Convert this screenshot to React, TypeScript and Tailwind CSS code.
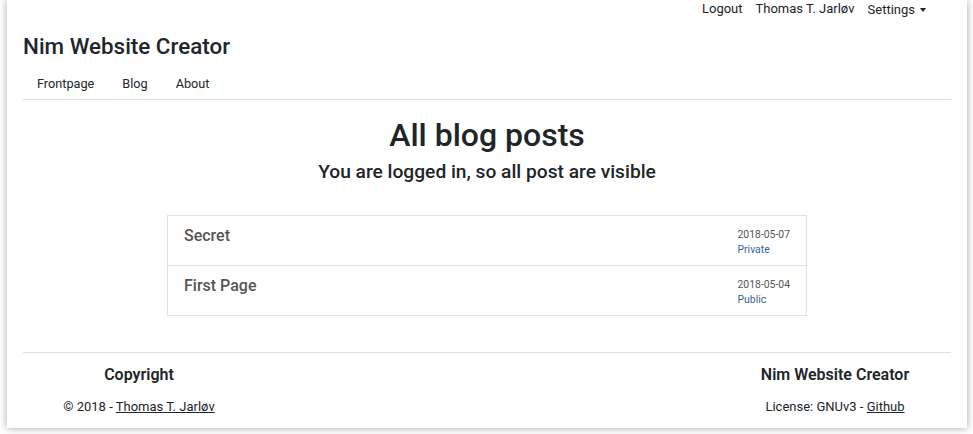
import React from 'react';

const POSTS = [
  { title: 'Secret', date: '2018-05-07', status: 'Private' },
  { title: 'First Page', date: '2018-05-04', status: 'Public' },
];

export default function App() {
  return (
    <div className="min-h-screen bg-white pl-[7px] pr-[6px] font-['Roboto',sans-serif] text-[#212529]">
      <div className="w-[960px] h-[428px] bg-white shadow-[0_0_8px_rgba(0,0,0,0.35)] flex flex-col">
        {/* Top bar */}
        <div className="flex justify-end gap-[13px] pr-[41px] pt-[1px] h-[18px] text-[13px] leading-[16px]">
          <span>Logout</span>
          <span>Thomas T. Jarløv</span>
          <span className="flex items-center gap-[5px]">
            Settings
            <span className="w-0 h-0 border-l-[3px] border-r-[3px] border-t-[4px] border-l-transparent border-r-transparent border-t-[#212529]" />
          </span>
        </div>

        <div className="px-4">
          <h1 className="mt-[15px] text-[22.4px] leading-[27px] font-medium">Nim Website Creator</h1>
          <nav className="flex mt-[16px] text-[12.7px] leading-[16px] pb-[7px] border-b border-[#dee2e6]">
            <span className="px-[14px]">Frontpage</span>
            <span className="px-[14px]">Blog</span>
            <span className="px-[14px]">About</span>
          </nav>
        </div>

        {/* Main */}
        <div className="flex flex-col items-center">
          <h2 className="mt-[16px] text-[32px] leading-[38px] font-medium">All blog posts</h2>
          <h4 className="mt-[6px] text-[19.2px] leading-[24px] font-medium">You are logged in, so all post are visible</h4>
          <div className="mt-[31px] w-[640px] border border-[#e2e2e2]">
            {POSTS.map((p, i) => (
              <div
                key={p.title}
                className={`flex justify-between pl-4 pr-4 ${i > 0 ? 'h-[50px] border-t border-[#e2e2e2]' : 'h-[49px]'}`}
              >
                <div className="pt-[10px] text-[16px] leading-[19px] font-medium text-[#555]">{p.title}</div>
                <div className="pt-[11px] text-[10.4px] leading-[15px] text-[#555]">
                  <div>{p.date}</div>
                  <div className="text-[#35659a]">{p.status}</div>
                </div>
              </div>
            ))}
          </div>
        </div>

        {/* Footer */}
        <div className="mx-4 mt-[36px] border-t border-[#dee2e6] grid grid-cols-4">
          <div className="flex flex-col items-center">
            <div className="mt-[12px] text-[16px] leading-[19px] font-semibold">Copyright</div>
            <div className="mt-[15px] text-[13px] leading-[16px]">
              © 2018 - <span className="underline">Thomas T. Jarløv</span>
            </div>
          </div>
          <div className="col-span-2" />
          <div className="flex flex-col items-center">
            <div className="mt-[12px] text-[16px] leading-[19px] font-semibold">Nim Website Creator</div>
            <div className="mt-[15px] text-[13px] leading-[16px]">
              License: GNUv3 - <span className="underline">Github</span>
            </div>
          </div>
        </div>
      </div>
    </div>
  );
}
